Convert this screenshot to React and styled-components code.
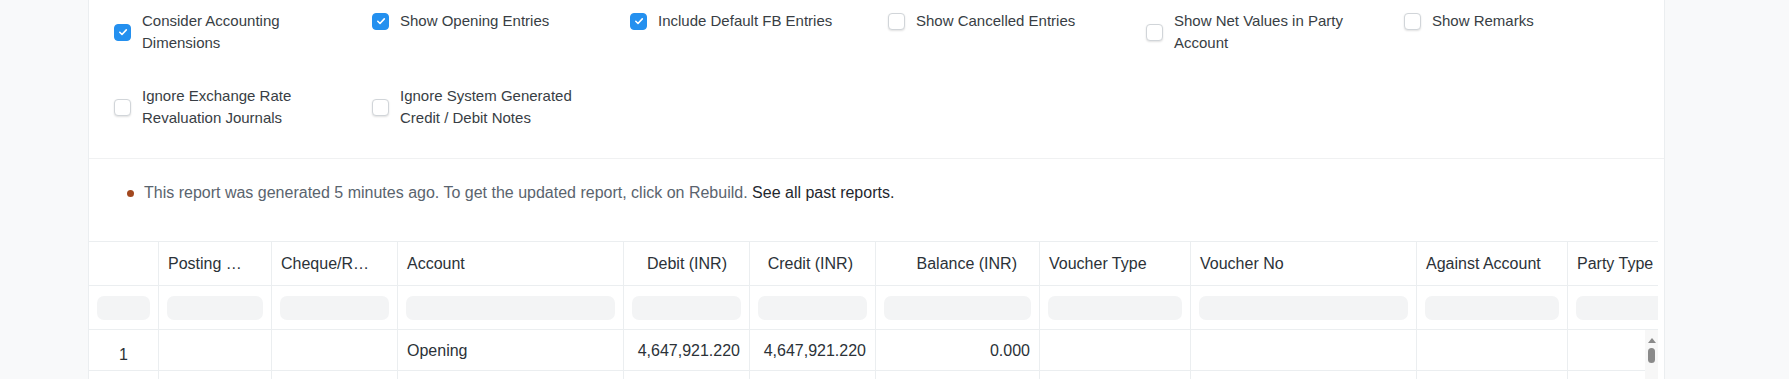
import React from 'react';
import styled, { createGlobalStyle } from 'styled-components';

const GlobalStyle = createGlobalStyle`
  * {
    box-sizing: border-box;
  }
  body {
    margin: 0;
    background: #f8f9fa;
    font-family: "Liberation Sans", Arial, sans-serif;
    color: #1f272e;
  }
`;

const filters = [
  { label: 'Consider Accounting Dimensions', checked: true },
  { label: 'Show Opening Entries', checked: true },
  { label: 'Include Default FB Entries', checked: true },
  { label: 'Show Cancelled Entries', checked: false },
  { label: 'Show Net Values in Party Account', checked: false },
  { label: 'Show Remarks', checked: false },
  { label: 'Ignore Exchange Rate Revaluation Journals', checked: false },
  { label: 'Ignore System Generated Credit / Debit Notes', checked: false },
];

const columns = [
  { key: 'idx', label: '', width: 70, align: 'center' },
  { key: 'posting_date', label: 'Posting …', width: 113 },
  { key: 'cheque', label: 'Cheque/R…', width: 126 },
  { key: 'account', label: 'Account', width: 226 },
  { key: 'debit', label: 'Debit (INR)', width: 126, align: 'right' },
  { key: 'credit', label: 'Credit (INR)', width: 126, align: 'right' },
  { key: 'balance', label: 'Balance (INR)', width: 164, align: 'right' },
  { key: 'voucher_type', label: 'Voucher Type', width: 151 },
  { key: 'voucher_no', label: 'Voucher No', width: 226 },
  { key: 'against', label: 'Against Account', width: 151 },
  { key: 'party_type', label: 'Party Type', width: 151 },
];

const rows = [
  {
    id: 'opening',
    idx: '1',
    account: 'Opening',
    debit: '4,647,921.220',
    credit: '4,647,921.220',
    balance: '0.000',
  },
  { id: 'next' },
];

function Checkbox({ checked }) {
  return (
    <Box $checked={checked}>
      {checked && (
        <svg width="12" height="12" viewBox="0 0 12 12" fill="none">
          <path
            d="M2.8 6.3l2.2 2.2 4.3-4.6"
            stroke="#fff"
            strokeWidth="1.6"
            strokeLinecap="round"
            strokeLinejoin="round"
          />
        </svg>
      )}
    </Box>
  );
}

function App() {
  return (
    <>
      <GlobalStyle />
      <Page>
        <Card>
          <FilterGrid>
            {filters.map(f => (
              <FilterItem key={f.label}>
                <Checkbox checked={f.checked} />
                <FilterLabel>{f.label}</FilterLabel>
              </FilterItem>
            ))}
          </FilterGrid>

          <Message>
            <Dot />
            <MessageText>
              This report was generated 5 minutes ago. To get the updated report, click on Rebuild.{' '}
              <PastLink>See all past reports.</PastLink>
            </MessageText>
          </Message>

          <Table>
            <Row $height={44}>
              {columns.map(col => (
                <HeadCell key={col.key} $width={col.width} $align={col.align}>
                  {col.label}
                </HeadCell>
              ))}
              <Spacer />
            </Row>
            <Row $height={44}>
              {columns.map(col => (
                <FilterCell key={col.key} $width={col.width}>
                  <FilterInput />
                </FilterCell>
              ))}
              <Spacer />
            </Row>
            <Body>
              {rows.map(row => (
                <Row key={row.id} $height={41}>
                  {columns.map(col => (
                    <Cell
                      key={col.key}
                      $width={col.width}
                      $align={col.align}
                      $index={col.key === 'idx'}
                    >
                      {row[col.key]}
                    </Cell>
                  ))}
                  <Spacer />
                </Row>
              ))}
              <Scrollbar>
                <ScrollArrow />
                <ScrollThumb />
              </Scrollbar>
            </Body>
          </Table>
        </Card>
      </Page>
    </>
  );
}

const Page = styled.div`
  padding-left: 88px;
  height: 379px;
  overflow: hidden;
`;

const Card = styled.div`
  width: 1577px;
  min-height: 379px;
  background: #fff;
  border-left: 1px solid #ebeef0;
  border-right: 1px solid #ebeef0;
`;

const FilterGrid = styled.div`
  display: grid;
  grid-template-columns: repeat(6, 258px);
  row-gap: 31px;
  padding: 10px 0 29px 25px;
  border-bottom: 1px solid #f0f1f2;
`;

const FilterItem = styled.label`
  display: flex;
  align-items: center;
  gap: 11px;
  align-self: start;
`;

const Box = styled.span`
  flex: 0 0 auto;
  display: flex;
  align-items: center;
  justify-content: center;
  width: 17px;
  height: 17px;
  border-radius: 4px;
  background: ${p => (p.$checked ? '#2490ef' : '#fff')};
  border: 1px solid ${p => (p.$checked ? '#2490ef' : '#d1d5d9')};
  box-shadow: ${p => (p.$checked ? 'none' : '0 1px 2px rgba(0, 0, 0, 0.12)')};
`;

const FilterLabel = styled.span`
  max-width: 190px;
  font-size: 15px;
  line-height: 22px;
  color: #383e44;
`;

const Message = styled.div`
  display: flex;
  align-items: center;
  padding: 23px 0 37px 38px;
`;

const Dot = styled.span`
  width: 7px;
  height: 7px;
  border-radius: 50%;
  background: #a2481f;
  margin-right: 10px;
`;

const MessageText = styled.p`
  margin: 0;
  font-size: 16px;
  line-height: 22px;
  color: #5a646e;
`;

const PastLink = styled.span`
  color: #1f272e;
`;

const Table = styled.div`
  width: 1569px;
  overflow: hidden;
  border-top: 1px solid #ebeef0;
`;

const Row = styled.div`
  display: flex;
  height: ${p => p.$height}px;
`;

const BaseCell = styled.div`
  flex: 0 0 ${p => p.$width}px;
  display: flex;
  align-items: center;
  border-right: 1px solid #ebeef0;
  border-bottom: 1px solid #ebeef0;
  font-size: 16px;
  white-space: nowrap;
  overflow: hidden;
`;

const Spacer = styled.div`
  flex: 0 0 200px;
  border-bottom: 1px solid #ebeef0;
`;

const HeadCell = styled(BaseCell)`
  justify-content: ${p => (p.$align === 'right' ? 'flex-end' : 'flex-start')};
  padding: ${p => (p.$align === 'right' ? '1px 22px 0 9px' : '1px 9px 0')};
  color: #2b3238;
`;

const FilterCell = styled(BaseCell)`
  padding: 0 8px;
`;

const FilterInput = styled.div`
  width: 100%;
  height: 24px;
  border-radius: 7px;
  background: #f3f4f5;
`;

const Body = styled.div`
  position: relative;
`;

const Cell = styled(BaseCell)`
  justify-content: ${p =>
    p.$align === 'right' ? 'flex-end' : p.$align === 'center' ? 'center' : 'flex-start'};
  padding: ${p => (p.$index ? '9px 9px 0' : '1px 9px 0')};
  color: #2b3238;
`;

const Scrollbar = styled.div`
  position: absolute;
  top: 0;
  right: 0;
  bottom: 0;
  width: 13px;
  background: #f7f7f7;
  display: flex;
  flex-direction: column;
  align-items: center;
  padding-top: 8px;
`;

const ScrollArrow = styled.span`
  width: 0;
  height: 0;
  border-left: 4px solid transparent;
  border-right: 4px solid transparent;
  border-bottom: 5px solid #8a8a8a;
`;

const ScrollThumb = styled.span`
  margin-top: 5px;
  width: 7px;
  height: 15px;
  border-radius: 4px;
  background: #8a8a8a;
`;

export default App;
